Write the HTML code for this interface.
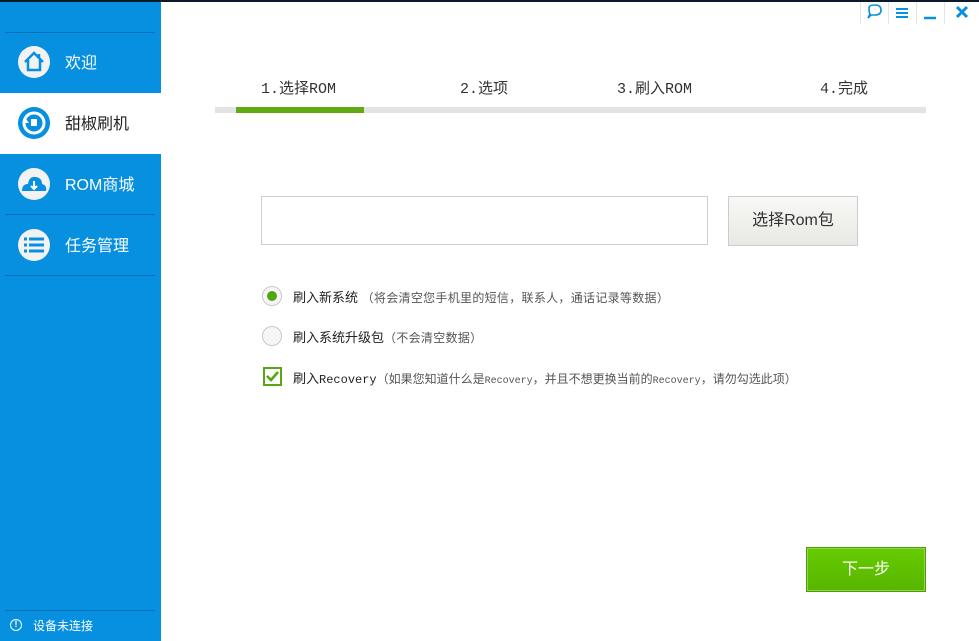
<!DOCTYPE html>
<html><head><meta charset="utf-8"><style>
*{margin:0;padding:0;box-sizing:border-box}
body{width:979px;height:641px;overflow:hidden;background:#fff;position:relative;font-family:"Liberation Sans","Noto Sans CJK SC",sans-serif}
.top{position:absolute;left:0;top:0;width:979px;height:2px;background:#0a1a2a}
.side{position:absolute;left:0;top:2px;width:161px;height:639px;background:#0790e0}
.sep{position:absolute;left:5px;width:150px;height:1px;background:#0670b8}
.nav{position:absolute;left:0;width:161px;height:61px;color:#fff;font-size:16px}
.nav.act{background:#fff;color:#222}
.nav span{position:absolute;left:65px;top:17px}
.nav svg{position:absolute;left:17px;top:13px}
.ctl{position:absolute;top:2px;height:22px;border-left:1px solid #e4e4e4}
.abs{position:absolute}
.step{position:absolute;top:77px;font-family:"Liberation Mono","Noto Sans CJK SC",monospace;font-size:15px;color:#333}
.opt{position:absolute;left:293px;font-size:13px;color:#222;white-space:nowrap}
.opt small{font-size:12px;color:#555;letter-spacing:0.3px}
</style></head><body>
<div class="top"></div>
<div class="side">
 <div class="sep" style="top:30px"></div>
 <div class="nav" style="top:30px"><svg width="34" height="34" viewBox="0 0 34 34"><circle cx="17" cy="17" r="16" fill="#f2f2f2"/><path d="M8 17 L17 8 L26 17 M11 15 V25 H23 V15 M22 9 V13" fill="none" stroke="#0790e0" stroke-width="2.5"/></svg><span>欢迎</span></div>
 <div class="nav act" style="top:91px"><svg width="34" height="34" viewBox="0 0 34 34"><circle cx="17" cy="17" r="16" fill="#0790e0"/><circle cx="17" cy="17" r="10" fill="none" stroke="#fff" stroke-width="3"/><path d="M5 17 L9 13 L12 17Z" fill="#fff"/><rect x="14" y="13" width="6" height="7" fill="#fff"/></svg><span>甜椒刷机</span></div>
 <div class="nav" style="top:152px"><svg width="34" height="34" viewBox="0 0 34 34"><circle cx="17" cy="17" r="16" fill="#f2f2f2"/><path d="M5 24 Q5 17 11 17 Q12 9 19 10 Q25 11 25 17 Q30 18 29 24Z" fill="#0790e0"/><path d="M17 14 V21 M14 19 L17 22 L20 19" stroke="#fff" stroke-width="2" fill="none"/></svg><span>ROM商城</span></div>
 <div class="sep" style="top:212px"></div>
 <div class="nav" style="top:213px"><svg width="34" height="34" viewBox="0 0 34 34"><circle cx="17" cy="17" r="16" fill="#f2f2f2"/><path d="M7 11H10M12 11H27M7 17H10M12 17H27M7 23H10M12 23H27" stroke="#0790e0" stroke-width="3"/></svg><span>任务管理</span></div>
 <div class="sep" style="top:273px"></div>
 <div class="sep" style="top:608px"></div>
 <div class="abs" style="left:10px;top:617px;width:12px;height:12px;border:1.5px solid #fff;border-radius:50%;color:#fff;font-size:9px;line-height:9px;text-align:center;font-weight:bold">!</div>
 <div class="abs" style="left:33px;top:615px;color:#fff;font-size:12px">设备未连接</div>
</div>
<div class="ctl" style="left:860px;width:28px"><svg width="26" height="22"><path d="M8 6 Q8 3 14 3 Q20 3 20 8 Q20 13 14 13 H10 L7 16 L9 12 Q8 11 8 6Z" fill="none" stroke="#0790e0" stroke-width="1.6"/></svg></div>
<div class="ctl" style="left:888px;width:28px"><svg width="26" height="22"><path d="M7 7H19M7 11H19M7 15H19" stroke="#0790e0" stroke-width="2"/></svg></div>
<div class="ctl" style="left:916px;width:28px"><svg width="26" height="22"><path d="M7 16H19" stroke="#0790e0" stroke-width="2.5"/></svg></div>
<div class="ctl" style="left:944px;width:35px"><svg width="34" height="22"><path d="M12 5L22 15M22 5L12 15" stroke="#0790e0" stroke-width="3"/></svg></div>

<div class="step" style="left:261px">1.选择ROM</div>
<div class="step" style="left:460px">2.选项</div>
<div class="step" style="left:617px">3.刷入ROM</div>
<div class="step" style="left:820px">4.完成</div>
<div class="abs" style="left:215px;top:107px;width:711px;height:6px;background:#e3e3e3"></div>
<div class="abs" style="left:236px;top:107px;width:128px;height:6px;background:#60ab14"></div>

<div class="abs" style="left:261px;top:196px;width:447px;height:49px;border:1px solid #cfcfcf"></div>
<div class="abs" style="left:728px;top:196px;width:130px;height:50px;border:1px solid #ccc;background:linear-gradient(#f8f8f6,#e8e8e4);font-size:16px;color:#333;text-align:center;line-height:48px">选择Rom包</div>

<div class="abs" style="left:262px;top:286px;width:20px;height:20px;border:1px solid #c8c8c8;border-radius:50%;background:#f6f6f6"><div style="margin:4px;width:10px;height:10px;border-radius:50%;background:#4ea80e"></div></div>
<div class="opt" style="top:287px">刷入新系统 <small>（将会清空您手机里的短信，联系人，通话记录等数据）</small></div>
<div class="abs" style="left:262px;top:326px;width:20px;height:20px;border:1px solid #c8c8c8;border-radius:50%;background:#f6f6f6"></div>
<div class="opt" style="top:327px">刷入系统升级包<small>（不会清空数据）</small></div>
<div class="abs" style="left:263px;top:367px;width:19px;height:19px;border:2px solid #5aa618;background:#fff"><svg width="15" height="15"><path d="M2 7L6 11L13 3" stroke="#4ea80e" stroke-width="2.5" fill="none"/></svg></div>
<div class="opt" style="top:368px">刷入<span style="font-family:'Liberation Mono',monospace;font-size:12px">Recovery</span><small style="letter-spacing:0">（如果您知道什么是<span style="font-family:'Liberation Mono',monospace;font-size:10px">Recovery</span>，并且不想更换当前的<span style="font-family:'Liberation Mono',monospace;font-size:10px">Recovery</span>，请勿勾选此项）</small></div>

<div class="abs" style="left:806px;top:547px;width:120px;height:45px;border:1px solid #4f9a08;background:linear-gradient(#66cc00,#58b400);box-shadow:inset 0 0 0 1px #8fd84a;color:#fff;font-size:16px;text-align:center;line-height:43px">下一步</div>
</body></html>
